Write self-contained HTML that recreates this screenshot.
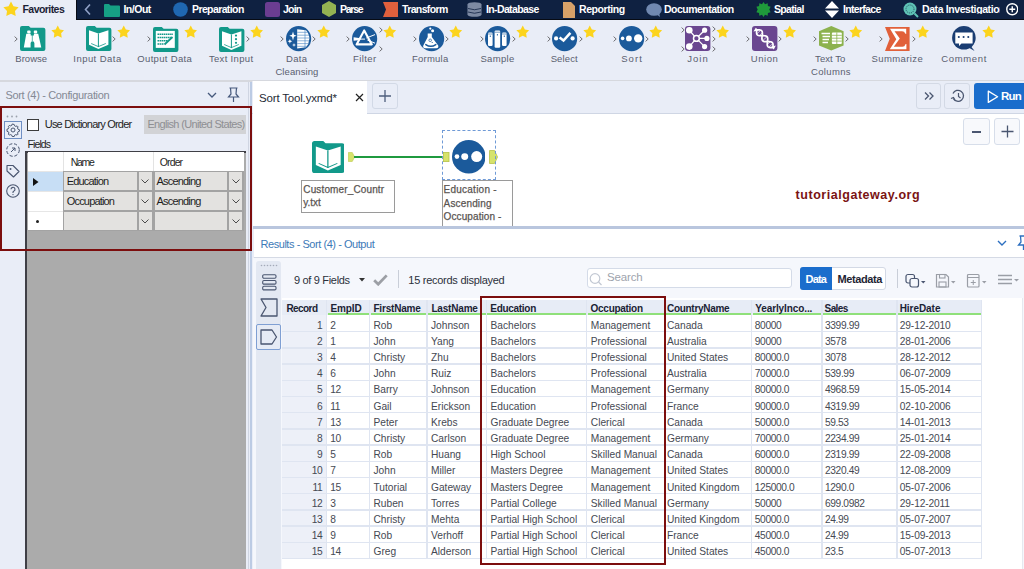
<!DOCTYPE html><html><head><meta charset="utf-8"><style>
*{box-sizing:border-box;margin:0;padding:0}
html,body{width:1024px;height:569px;overflow:hidden;background:#e9edf7;font-family:"Liberation Sans",sans-serif;position:relative}
.a{position:absolute}
.tx{position:absolute;white-space:nowrap}
.navt{position:absolute;color:#fff;font-weight:bold;font-size:11px;top:3px;white-space:nowrap;line-height:13px}
.lbl{position:absolute;font-size:10px;color:#596070;white-space:nowrap;text-align:center;line-height:13px;width:90px}
.c{position:absolute;top:0;height:100%;font-size:10.5px;color:#3b404b;white-space:nowrap;overflow:hidden;padding-left:4px;border-right:1px solid #dfe5f1;line-height:16px}
.h{font-weight:bold;color:#1c2438;background:#e7ecf6}
.rh{background:#edf0f8;text-align:right;padding-right:5px;padding-left:0}
</style></head><body>
<div class="a" style="left:75.5px;top:0;width:949px;height:19.5px;background:#0f2141;border-left:1px solid #070b14;border-bottom:1.5px solid #070b14"></div>
<svg class="a" style="left:2.5px;top:0.5px" width="16" height="16" viewBox="0 0 24 24"><path d="M12.00 0.90 L15.70 7.80 L23.41 9.19 L17.99 14.85 L19.05 22.61 L12.00 19.20 L4.95 22.61 L6.01 14.85 L0.59 9.19 L8.30 7.80z" fill="#fcd41d"/></svg>
<div class="tx" id="t_1" style="left:22.50px;top:3.81px;font-size:10.5px;line-height:10.5px;color:#1b2236;font-weight:bold;letter-spacing:-0.557px;">Favorites</div>
<svg class="a" style="left:83px;top:3px" width="10" height="13" viewBox="0 0 10 13"><path d="M7 1.5L2.5 6.5 7 11.5" stroke="#8fa0c6" stroke-width="1.6" fill="none"/></svg>
<svg class="a" style="left:104px;top:3px" width="16" height="14" viewBox="0 0 16 14"><path d="M0 2a1 1 0 0 1 1-1h4l1.5 1.5H15a1 1 0 0 1 1 1V13a1 1 0 0 1-1 1H1a1 1 0 0 1-1-1z" fill="#16a085"/></svg>
<div class="tx" id="t_2" style="left:123.40px;top:3.81px;font-size:10.5px;line-height:10.5px;color:#fff;font-weight:bold;letter-spacing:-0.475px;">In/Out</div>
<svg class="a" style="left:173px;top:2px" width="15" height="15" viewBox="0 0 15 15"><circle cx="7.5" cy="7.5" r="7.3" fill="#1f67b1"/></svg>
<div class="tx" id="t_3" style="left:192.00px;top:3.81px;font-size:10.5px;line-height:10.5px;color:#fff;font-weight:bold;letter-spacing:-0.605px;">Preparation</div>
<svg class="a" style="left:265px;top:2px" width="15" height="15" viewBox="0 0 15 15"><rect x="0" y="0" width="15" height="15" rx="2.5" fill="#6b3d91"/></svg>
<div class="tx" id="t_4" style="left:283.00px;top:3.81px;font-size:10.5px;line-height:10.5px;color:#fff;font-weight:bold;letter-spacing:-0.782px;">Join</div>
<svg class="a" style="left:322px;top:1px" width="14" height="16" viewBox="0 0 14 16"><path d="M7 0L14 4V12L7 16L0 12V4z" fill="#94b352"/></svg>
<div class="tx" id="t_5" style="left:340.00px;top:3.81px;font-size:10.5px;line-height:10.5px;color:#fff;font-weight:bold;letter-spacing:-1.262px;">Parse</div>
<svg class="a" style="left:383px;top:2px" width="15" height="15" viewBox="0 0 15 15"><path d="M0 0H15V15H0L3 7.5z" fill="#e0603d"/></svg>
<div class="tx" id="t_6" style="left:402.00px;top:3.81px;font-size:10.5px;line-height:10.5px;color:#fff;font-weight:bold;letter-spacing:-0.632px;">Transform</div>
<svg class="a" style="left:467px;top:2px" width="15" height="15" viewBox="0 0 15 15"><ellipse cx="7.5" cy="2.5" rx="7" ry="2.3" fill="#7d8aa3"/><rect x="0.5" y="2.5" width="14" height="10" fill="#7d8aa3"/><ellipse cx="7.5" cy="12.5" rx="7" ry="2.3" fill="#7d8aa3"/><path d="M1 6.5Q7.5 9 14 6.5M1 10Q7.5 12.5 14 10" stroke="#0f2141" stroke-width="0.8" fill="none"/></svg>
<div class="tx" id="t_7" style="left:486.00px;top:3.81px;font-size:10.5px;line-height:10.5px;color:#fff;font-weight:bold;letter-spacing:-0.630px;">In-Database</div>
<svg class="a" style="left:563px;top:2px" width="12" height="16" viewBox="0 0 12 16"><path d="M0 0H8L12 4V16H0z" fill="#d7a168"/></svg>
<div class="tx" id="t_8" style="left:579.00px;top:3.81px;font-size:10.5px;line-height:10.5px;color:#fff;font-weight:bold;letter-spacing:-0.434px;">Reporting</div>
<svg class="a" style="left:646px;top:3px" width="16" height="14" viewBox="0 0 16 14"><ellipse cx="8" cy="6.5" rx="7.8" ry="6.3" fill="#7088b0"/><path d="M10 11L14 14 13 9z" fill="#7088b0"/></svg>
<div class="tx" id="t_9" style="left:664.00px;top:3.81px;font-size:10.5px;line-height:10.5px;color:#fff;font-weight:bold;letter-spacing:-0.516px;">Documentation</div>
<svg class="a" style="left:756px;top:2px" width="15" height="15" viewBox="0 0 15 15"><path d="M7.5 0L9 2.2 11.7 1.3 11.9 4 14.6 4.8 13.3 7.5 14.6 10.2 11.9 11 11.7 13.7 9 12.8 7.5 15 6 12.8 3.3 13.7 3.1 11 .4 10.2 1.7 7.5 .4 4.8 3.1 4 3.3 1.3 6 2.2z" fill="#1f9a3b"/></svg>
<div class="tx" id="t_10" style="left:774.00px;top:3.81px;font-size:10.5px;line-height:10.5px;color:#fff;font-weight:bold;letter-spacing:-0.686px;">Spatial</div>
<svg class="a" style="left:825px;top:1px" width="14" height="17" viewBox="0 0 14 17"><path d="M7 0L14 7.5H0z M0 9.5H14L7 17z" fill="#fff"/></svg>
<div class="tx" id="t_11" style="left:843.00px;top:3.81px;font-size:10.5px;line-height:10.5px;color:#fff;font-weight:bold;letter-spacing:-0.692px;">Interface</div>
<svg class="a" style="left:903px;top:2px" width="16" height="16" viewBox="0 0 16 16"><circle cx="7" cy="7" r="6.5" fill="#5fc3b6"/><circle cx="7" cy="7" r="4" fill="none" stroke="#0f2141" stroke-width="0.7" stroke-dasharray="1 1"/><path d="M11.5 11.5L15 15" stroke="#5fc3b6" stroke-width="2"/></svg>
<div class="tx" id="t_12" style="left:922.00px;top:3.81px;font-size:10.5px;line-height:10.5px;color:#fff;font-weight:bold;letter-spacing:-0.400px;width:78px;overflow:hidden;">Data Investigation</div>
<svg class="a" style="left:1005.8px;top:3.4px" width="12.5" height="12.5" viewBox="0 0 12.5 12.5"><circle cx="6.25" cy="6.25" r="5.5" stroke="#fff" stroke-width="1.4" fill="none"/><path d="M6.25 3.3V9.2M3.3 6.25H9.2" stroke="#fff" stroke-width="1.4"/></svg>
<div class="a" style="left:0;top:80px;width:1024px;height:2px;background:#d6d8de"></div>
<svg class="a" style="left:19.7px;top:26.2px;overflow:visible" width="26" height="26" viewBox="0 0 26 26"><path d="M0 2a2 2 0 0 1 2-2H8.8l1.8 1.8H23.4a2 2 0 0 1 2 2V23a2 2 0 0 1-2 2H2a2 2 0 0 1-2-2z" fill="#12998a"/><rect x="7.2" y="4.6" width="3.4" height="2.8" rx=".8" fill="#fff"/><rect x="13.8" y="4.6" width="3.4" height="2.8" rx=".8" fill="#fff"/><path d="M3.8 21.6L6.3 7.8H10.7V9.6H13.9V7.8H18.2L21.3 21.6H14.4V17.2a1.9 1.9 0 0 0-3.8 0V21.6z" fill="#fff"/><path d="M12.3 8.8V15" stroke="#12998a" stroke-width=".7"/></svg>
<svg class="a" style="left:50.599999999999994px;top:25.2px" width="13.5" height="13.5" viewBox="0 0 24 24"><path d="M12.00 0.90 L15.70 7.80 L23.41 9.19 L17.99 14.85 L19.05 22.61 L12.00 19.20 L4.95 22.61 L6.01 14.85 L0.59 9.19 L8.30 7.80z" fill="#fcd41d"/></svg>
<svg class="a" style="left:13.899999999999999px;top:36px" width="4" height="6" viewBox="0 0 4 6"><path d="M.6 .6L3.2 3 .6 5.4" stroke="#6e6e72" stroke-width="1" fill="none"/></svg>
<div class="tx" id="t_13" style="left:-118.78px;width:300px;text-align:center;top:53.66px;font-size:9.5px;line-height:9.5px;color:#5a6070;letter-spacing:0.039px;">Browse</div>
<svg class="a" style="left:85.9px;top:26.2px;overflow:visible" width="26" height="26" viewBox="0 0 26 26"><path d="M0 2a2 2 0 0 1 2-2H8.8l1.8 1.8H23.4a2 2 0 0 1 2 2V23a2 2 0 0 1-2 2H2a2 2 0 0 1-2-2z" fill="#12998a"/><path d="M3 4.2L12.4 7.5 22.4 4.2V18.8L12.4 23 3 18.8z" fill="#fff"/><path d="M12.4 7.5V21" stroke="#12998a" stroke-width="1"/><path d="M5.2 17.5L12.4 20.6 19.8 17.5" stroke="#12998a" stroke-width=".8" fill="none"/></svg>
<svg class="a" style="left:116.80000000000001px;top:25.2px" width="13.5" height="13.5" viewBox="0 0 24 24"><path d="M12.00 0.90 L15.70 7.80 L23.41 9.19 L17.99 14.85 L19.05 22.61 L12.00 19.20 L4.95 22.61 L6.01 14.85 L0.59 9.19 L8.30 7.80z" fill="#fcd41d"/></svg>
<svg class="a" style="left:112.4px;top:36px" width="4" height="6" viewBox="0 0 4 6"><path d="M.6 .6L3.2 3 .6 5.4" stroke="#6e6e72" stroke-width="1" fill="none"/></svg>
<div class="tx" id="t_14" style="left:-52.53px;width:300px;text-align:center;top:53.66px;font-size:9.5px;line-height:9.5px;color:#5a6070;letter-spacing:0.443px;">Input Data</div>
<svg class="a" style="left:152.6px;top:26.6px;overflow:visible" width="26" height="26" viewBox="0 0 26 26"><path d="M0 2a2 2 0 0 1 2-2H8.8l1.8 1.8H23.4a2 2 0 0 1 2 2V23a2 2 0 0 1-2 2H2a2 2 0 0 1-2-2z" fill="#12998a"/><rect x="2.8" y="3.9" width="19" height="17" fill="#fff"/><path d="M4.5 7.2H20M4.5 10.6H18M4.5 13.8H14.5M4.5 17H11" stroke="#12998a" stroke-width="1.5" stroke-dasharray="1.6 .5"/><path d="M11.5 17.5L19.5 10" stroke="#12998a" stroke-width="1.8"/></svg>
<svg class="a" style="left:183.5px;top:25.2px" width="13.5" height="13.5" viewBox="0 0 24 24"><path d="M12.00 0.90 L15.70 7.80 L23.41 9.19 L17.99 14.85 L19.05 22.61 L12.00 19.20 L4.95 22.61 L6.01 14.85 L0.59 9.19 L8.30 7.80z" fill="#fcd41d"/></svg>
<svg class="a" style="left:146.79999999999998px;top:36px" width="4" height="6" viewBox="0 0 4 6"><path d="M.6 .6L3.2 3 .6 5.4" stroke="#6e6e72" stroke-width="1" fill="none"/></svg>
<div class="tx" id="t_15" style="left:14.71px;width:300px;text-align:center;top:53.66px;font-size:9.5px;line-height:9.5px;color:#5a6070;letter-spacing:0.320px;">Output Data</div>
<svg class="a" style="left:219px;top:26.6px;overflow:visible" width="26" height="26" viewBox="0 0 26 26"><path d="M0 2a2 2 0 0 1 2-2H8.8l1.8 1.8H23.4a2 2 0 0 1 2 2V23a2 2 0 0 1-2 2H2a2 2 0 0 1-2-2z" fill="#12998a"/><path d="M3 4.2L12.4 7.5 22.4 4.2V18.8L12.4 23 3 18.8z" fill="#fff"/><path d="M12.4 7.5V21" stroke="#12998a" stroke-width="1"/><path d="M5.2 17.5L12.4 20.6 19.8 17.5" stroke="#12998a" stroke-width=".8" fill="none"/><circle cx="17" cy="8.6" r="1.1" fill="#12998a"/><circle cx="17" cy="12.2" r="1.1" fill="#12998a"/><circle cx="17" cy="15.8" r="1.1" fill="#12998a"/></svg>
<svg class="a" style="left:249.9px;top:25.2px" width="13.5" height="13.5" viewBox="0 0 24 24"><path d="M12.00 0.90 L15.70 7.80 L23.41 9.19 L17.99 14.85 L19.05 22.61 L12.00 19.20 L4.95 22.61 L6.01 14.85 L0.59 9.19 L8.30 7.80z" fill="#fcd41d"/></svg>
<svg class="a" style="left:245.5px;top:36px" width="4" height="6" viewBox="0 0 4 6"><path d="M.6 .6L3.2 3 .6 5.4" stroke="#6e6e72" stroke-width="1" fill="none"/></svg>
<div class="tx" id="t_16" style="left:81.17px;width:300px;text-align:center;top:53.66px;font-size:9.5px;line-height:9.5px;color:#5a6070;letter-spacing:0.333px;">Text Input</div>
<svg class="a" style="left:285.6px;top:26.1px;overflow:visible" width="26" height="26" viewBox="0 0 26 26"><circle cx="12.6" cy="12.7" r="12.6" fill="#1b5a9b"/><path d="M11.2 3.3L20 4.2Q23.5 8 23.3 13Q23 18 20 21.3L11.2 22.6z" fill="#fff"/><path d="M11.2 6.3H22M11.2 9.2H23M11.2 12H23.3M11.2 14.8H23.2M11.2 17.6H22.5M11.2 20.3H21M19 4V22" stroke="#3f7fc0" stroke-width=".6"/><path d="M7 5.6L8 8.8 10.6 9.8 8 10.8 7 14.5 6 10.8 3.3 9.8 6 8.8z M3.9 13L4.5 14.6 6.3 15.3 4.5 16 3.9 17.7 3.3 16 1.6 15.3 3.3 14.6z M8 17L8.5 18.4 10 19 8.5 19.6 8 21 7.5 19.6 6 19 7.5 18.4z" fill="#fff"/></svg>
<svg class="a" style="left:316.5px;top:25.2px" width="13.5" height="13.5" viewBox="0 0 24 24"><path d="M12.00 0.90 L15.70 7.80 L23.41 9.19 L17.99 14.85 L19.05 22.61 L12.00 19.20 L4.95 22.61 L6.01 14.85 L0.59 9.19 L8.30 7.80z" fill="#fcd41d"/></svg>
<svg class="a" style="left:279.8px;top:36px" width="4" height="6" viewBox="0 0 4 6"><path d="M.6 .6L3.2 3 .6 5.4" stroke="#6e6e72" stroke-width="1" fill="none"/></svg>
<svg class="a" style="left:312.1px;top:36px" width="4" height="6" viewBox="0 0 4 6"><path d="M.6 .6L3.2 3 .6 5.4" stroke="#6e6e72" stroke-width="1" fill="none"/></svg>
<div class="tx" id="t_17" style="left:146.76px;width:300px;text-align:center;top:53.66px;font-size:9.5px;line-height:9.5px;color:#5a6070;letter-spacing:0.314px;">Data</div>
<div class="tx" id="t_18" style="left:146.95px;width:300px;text-align:center;top:66.66px;font-size:9.5px;line-height:9.5px;color:#5a6070;letter-spacing:0.094px;">Cleansing</div>
<svg class="a" style="left:352.2px;top:25.9px;overflow:visible" width="26" height="26" viewBox="0 0 26 26"><circle cx="12.6" cy="12.7" r="12.6" fill="#1b5a9b"/><path d="M12.2 4.4L19.8 18.4H4.6z" fill="none" stroke="#fff" stroke-width="2.1" stroke-linejoin="round"/><path d="M1.6 11.2L8.6 12.2V14L1.6 14.8z" fill="#fff"/><path d="M8.5 13.1H13M14.3 12L23 8.6M15.3 14L23 17.2" stroke="#fff" stroke-width="1"/></svg>
<svg class="a" style="left:383.09999999999997px;top:25.2px" width="13.5" height="13.5" viewBox="0 0 24 24"><path d="M12.00 0.90 L15.70 7.80 L23.41 9.19 L17.99 14.85 L19.05 22.61 L12.00 19.20 L4.95 22.61 L6.01 14.85 L0.59 9.19 L8.30 7.80z" fill="#fcd41d"/></svg>
<svg class="a" style="left:346.4px;top:36px" width="4" height="6" viewBox="0 0 4 6"><path d="M.6 .6L3.2 3 .6 5.4" stroke="#6e6e72" stroke-width="1" fill="none"/></svg>
<svg class="a" style="left:378.7px;top:26.5px" width="4" height="6" viewBox="0 0 4 6"><path d="M.6 .6L3.2 3 .6 5.4" stroke="#6e6e72" stroke-width="1" fill="none"/></svg>
<svg class="a" style="left:378.7px;top:45.5px" width="4" height="6" viewBox="0 0 4 6"><path d="M.6 .6L3.2 3 .6 5.4" stroke="#6e6e72" stroke-width="1" fill="none"/></svg>
<div class="tx" id="t_19" style="left:214.84px;width:300px;text-align:center;top:53.66px;font-size:9.5px;line-height:9.5px;color:#5a6070;letter-spacing:0.389px;">Filter</div>
<svg class="a" style="left:418.5px;top:26px;overflow:visible" width="26" height="26" viewBox="0 0 26 26"><circle cx="12.6" cy="12.7" r="12.6" fill="#1b5a9b"/><path d="M8.7 7.5H12.8V11L19.2 19.5A2.2 2.2 0 0 1 17.4 22.3H6.2A2.2 2.2 0 0 1 4.3 19.5L8.7 11z" fill="#fff"/><path d="M6.8 18.6Q11.8 22 16.8 18.6" stroke="#1b5a9b" stroke-width="1.5" fill="none" stroke-linecap="round"/><circle cx="11.2" cy="14.3" r="1.3" fill="none" stroke="#1b5a9b" stroke-width=".7"/><circle cx="13.2" cy="16.5" r=".6" fill="#1b5a9b"/><circle cx="13.6" cy="4.8" r="1.5" fill="#fff"/><circle cx="11.3" cy="2.6" r="1.1" fill="#fff"/></svg>
<svg class="a" style="left:449.4px;top:25.2px" width="13.5" height="13.5" viewBox="0 0 24 24"><path d="M12.00 0.90 L15.70 7.80 L23.41 9.19 L17.99 14.85 L19.05 22.61 L12.00 19.20 L4.95 22.61 L6.01 14.85 L0.59 9.19 L8.30 7.80z" fill="#fcd41d"/></svg>
<svg class="a" style="left:412.7px;top:36px" width="4" height="6" viewBox="0 0 4 6"><path d="M.6 .6L3.2 3 .6 5.4" stroke="#6e6e72" stroke-width="1" fill="none"/></svg>
<svg class="a" style="left:445.0px;top:36px" width="4" height="6" viewBox="0 0 4 6"><path d="M.6 .6L3.2 3 .6 5.4" stroke="#6e6e72" stroke-width="1" fill="none"/></svg>
<div class="tx" id="t_20" style="left:280.21px;width:300px;text-align:center;top:53.66px;font-size:9.5px;line-height:9.5px;color:#5a6070;letter-spacing:0.218px;">Formula</div>
<svg class="a" style="left:485.3px;top:26.2px;overflow:visible" width="26" height="26" viewBox="0 0 26 26"><circle cx="12.6" cy="12.7" r="12.6" fill="#1b5a9b"/><rect x="3" y="6.5" width="4.6" height="13.5" rx="1.2" fill="#fff"/><rect x="9.6" y="4.6" width="5.6" height="17.2" rx="1.2" fill="#fff"/><rect x="17" y="6.5" width="4.6" height="13.5" rx="1.2" fill="#fff"/><path d="M3 8H7.6M9.6 6.2H15.2M17 8H21.6" stroke="#1b5a9b" stroke-width=".6"/><path d="M5.3 9.5V11M12.4 8V9.5M19.3 9.5V11" stroke="#1b5a9b" stroke-width=".9"/></svg>
<svg class="a" style="left:516.2px;top:25.2px" width="13.5" height="13.5" viewBox="0 0 24 24"><path d="M12.00 0.90 L15.70 7.80 L23.41 9.19 L17.99 14.85 L19.05 22.61 L12.00 19.20 L4.95 22.61 L6.01 14.85 L0.59 9.19 L8.30 7.80z" fill="#fcd41d"/></svg>
<svg class="a" style="left:479.5px;top:36px" width="4" height="6" viewBox="0 0 4 6"><path d="M.6 .6L3.2 3 .6 5.4" stroke="#6e6e72" stroke-width="1" fill="none"/></svg>
<svg class="a" style="left:511.8px;top:36px" width="4" height="6" viewBox="0 0 4 6"><path d="M.6 .6L3.2 3 .6 5.4" stroke="#6e6e72" stroke-width="1" fill="none"/></svg>
<div class="tx" id="t_21" style="left:347.57px;width:300px;text-align:center;top:53.66px;font-size:9.5px;line-height:9.5px;color:#5a6070;letter-spacing:0.337px;">Sample</div>
<svg class="a" style="left:552.3px;top:26.2px;overflow:visible" width="26" height="26" viewBox="0 0 26 26"><circle cx="12.6" cy="12.7" r="12.6" fill="#1b5a9b"/><circle cx="4.1" cy="12.4" r="2.1" fill="#fff"/><circle cx="20.6" cy="12.4" r="2.1" fill="#fff"/><path d="M7.6 11.6L11.5 14.6 18.4 6.8" stroke="#fff" stroke-width="2.5" fill="none"/></svg>
<svg class="a" style="left:583.1999999999999px;top:25.2px" width="13.5" height="13.5" viewBox="0 0 24 24"><path d="M12.00 0.90 L15.70 7.80 L23.41 9.19 L17.99 14.85 L19.05 22.61 L12.00 19.20 L4.95 22.61 L6.01 14.85 L0.59 9.19 L8.30 7.80z" fill="#fcd41d"/></svg>
<svg class="a" style="left:546.5px;top:36px" width="4" height="6" viewBox="0 0 4 6"><path d="M.6 .6L3.2 3 .6 5.4" stroke="#6e6e72" stroke-width="1" fill="none"/></svg>
<svg class="a" style="left:578.8px;top:36px" width="4" height="6" viewBox="0 0 4 6"><path d="M.6 .6L3.2 3 .6 5.4" stroke="#6e6e72" stroke-width="1" fill="none"/></svg>
<div class="tx" id="t_22" style="left:414.21px;width:300px;text-align:center;top:53.66px;font-size:9.5px;line-height:9.5px;color:#5a6070;letter-spacing:0.122px;">Select</div>
<svg class="a" style="left:618.5px;top:26.2px;overflow:visible" width="26" height="26" viewBox="0 0 26 26"><circle cx="12.6" cy="12.7" r="12.6" fill="#1b5a9b"/><circle cx="3.6" cy="12.4" r="1.8" fill="#fff"/><circle cx="9.9" cy="12.4" r="2.9" fill="#fff"/><circle cx="19.2" cy="12.4" r="4.2" fill="#fff"/></svg>
<svg class="a" style="left:649.4px;top:25.2px" width="13.5" height="13.5" viewBox="0 0 24 24"><path d="M12.00 0.90 L15.70 7.80 L23.41 9.19 L17.99 14.85 L19.05 22.61 L12.00 19.20 L4.95 22.61 L6.01 14.85 L0.59 9.19 L8.30 7.80z" fill="#fcd41d"/></svg>
<svg class="a" style="left:612.7px;top:36px" width="4" height="6" viewBox="0 0 4 6"><path d="M.6 .6L3.2 3 .6 5.4" stroke="#6e6e72" stroke-width="1" fill="none"/></svg>
<svg class="a" style="left:645.0px;top:36px" width="4" height="6" viewBox="0 0 4 6"><path d="M.6 .6L3.2 3 .6 5.4" stroke="#6e6e72" stroke-width="1" fill="none"/></svg>
<div class="tx" id="t_23" style="left:482.11px;width:300px;text-align:center;top:53.66px;font-size:9.5px;line-height:9.5px;color:#5a6070;letter-spacing:1.116px;">Sort</div>
<svg class="a" style="left:685px;top:26.4px;overflow:visible" width="26" height="26" viewBox="0 0 26 26"><rect x="0" y="0" width="25.4" height="25" rx="3" fill="#6a4690"/><path d="M4.3 4.2L11.4 12.4M4.3 20.6L11.4 12.4M11.4 12.4L19.6 4.2M11.4 12.4H21.9M11.4 12.4L19.6 20.6" stroke="#fff" stroke-width="1.3"/><circle cx="11.4" cy="12.4" r="2.9" fill="#6a4690" stroke="#fff" stroke-width="1.5"/><circle cx="4.3" cy="4.2" r="3.3" fill="#fff"/><circle cx="4.3" cy="20.6" r="3.3" fill="#fff"/><circle cx="19.6" cy="4.2" r="2.6" fill="#fff"/><circle cx="21.9" cy="12.4" r="2.6" fill="#fff"/><circle cx="19.6" cy="20.6" r="2.6" fill="#fff"/></svg>
<svg class="a" style="left:715.9px;top:25.2px" width="13.5" height="13.5" viewBox="0 0 24 24"><path d="M12.00 0.90 L15.70 7.80 L23.41 9.19 L17.99 14.85 L19.05 22.61 L12.00 19.20 L4.95 22.61 L6.01 14.85 L0.59 9.19 L8.30 7.80z" fill="#fcd41d"/></svg>
<svg class="a" style="left:680.5px;top:26.5px" width="4" height="6" viewBox="0 0 4 6"><path d="M.6 .6L3.2 3 .6 5.4" stroke="#6e6e72" stroke-width="1" fill="none"/></svg>
<svg class="a" style="left:680.5px;top:45.5px" width="4" height="6" viewBox="0 0 4 6"><path d="M.6 .6L3.2 3 .6 5.4" stroke="#6e6e72" stroke-width="1" fill="none"/></svg>
<svg class="a" style="left:712px;top:26px" width="4" height="6" viewBox="0 0 4 6"><path d="M.6 .6L3.2 3 .6 5.4" stroke="#6e6e72" stroke-width="1" fill="none"/></svg>
<svg class="a" style="left:712px;top:36px" width="4" height="6" viewBox="0 0 4 6"><path d="M.6 .6L3.2 3 .6 5.4" stroke="#6e6e72" stroke-width="1" fill="none"/></svg>
<svg class="a" style="left:712px;top:45.5px" width="4" height="6" viewBox="0 0 4 6"><path d="M.6 .6L3.2 3 .6 5.4" stroke="#6e6e72" stroke-width="1" fill="none"/></svg>
<div class="tx" id="t_24" style="left:548.01px;width:300px;text-align:center;top:53.66px;font-size:9.5px;line-height:9.5px;color:#5a6070;letter-spacing:1.024px;">Join</div>
<svg class="a" style="left:751.9px;top:26.2px;overflow:visible" width="26" height="26" viewBox="0 0 26 26"><rect x="0" y="0" width="25.4" height="25" rx="3" fill="#6a4690"/><path d="M4.80 3.80 L4.68 4.71 L4.59 5.60 L4.55 6.44 L4.59 7.20 L4.74 7.88 L5.00 8.45 L5.38 8.91 L5.88 9.27 L6.50 9.51 L7.22 9.67 L8.03 9.74 L8.91 9.76 L9.82 9.74 L10.75 9.72 L11.65 9.71 L12.51 9.74 L13.30 9.84 L13.99 10.02 L14.57 10.30 L15.03 10.69 L15.37 11.19 L15.59 11.80 L15.70 12.51 L15.71 13.30 L15.65 14.16 L15.55 15.06 L15.42 15.97 L15.31 16.88 L15.23 17.75 L15.22 18.57 L15.30 19.30 L15.48 19.95 L15.78 20.48 L16.20 20.91 L16.74 21.23 L17.39 21.44 L18.15 21.57 L18.99 21.62 L19.88 21.62 L20.80 21.60" stroke="#fff" stroke-width="1.7" fill="none"/><path d="M4.80 3.80 L5.72 3.78 L6.61 3.78 L7.45 3.83 L8.21 3.96 L8.86 4.17 L9.40 4.49 L9.82 4.92 L10.12 5.45 L10.30 6.10 L10.38 6.83 L10.37 7.65 L10.29 8.52 L10.18 9.43 L10.05 10.34 L9.95 11.24 L9.89 12.10 L9.90 12.89 L10.01 13.60 L10.23 14.21 L10.57 14.71 L11.03 15.10 L11.61 15.38 L12.30 15.56 L13.09 15.66 L13.95 15.69 L14.85 15.68 L15.78 15.66 L16.69 15.64 L17.57 15.66 L18.38 15.73 L19.10 15.89 L19.72 16.13 L20.22 16.49 L20.60 16.95 L20.86 17.52 L21.01 18.20 L21.05 18.96 L21.01 19.80 L20.92 20.69 L20.80 21.60" stroke="#fff" stroke-width="1.7" fill="none"/><path d="M4.74 7.88L8.86 4.17M7.22 9.67L10.38 6.83M11.65 9.71L9.95 11.24M15.03 10.69L10.57 14.71M15.65 14.16L13.95 15.69M15.22 18.57L18.38 15.73M16.74 21.23L20.86 17.52" stroke="#fff" stroke-width="0.8" opacity="0.8"/><path d="M1.5 5.5L3.8 1.8 6.5 4.5z M23.8 19.5L21.8 23.5 19 20.8z" fill="#fff"/></svg>
<svg class="a" style="left:782.8px;top:25.2px" width="13.5" height="13.5" viewBox="0 0 24 24"><path d="M12.00 0.90 L15.70 7.80 L23.41 9.19 L17.99 14.85 L19.05 22.61 L12.00 19.20 L4.95 22.61 L6.01 14.85 L0.59 9.19 L8.30 7.80z" fill="#fcd41d"/></svg>
<svg class="a" style="left:746.1px;top:36px" width="4" height="6" viewBox="0 0 4 6"><path d="M.6 .6L3.2 3 .6 5.4" stroke="#6e6e72" stroke-width="1" fill="none"/></svg>
<svg class="a" style="left:778.4px;top:36px" width="4" height="6" viewBox="0 0 4 6"><path d="M.6 .6L3.2 3 .6 5.4" stroke="#6e6e72" stroke-width="1" fill="none"/></svg>
<div class="tx" id="t_25" style="left:614.60px;width:300px;text-align:center;top:53.66px;font-size:9.5px;line-height:9.5px;color:#5a6070;letter-spacing:0.594px;">Union</div>
<svg class="a" style="left:818.5px;top:26.4px;overflow:visible" width="26" height="26" viewBox="0 0 26 26"><path d="M12.3 0L24.6 5.3V19.4L12.3 24.6 0 19.4V5.3z" fill="#8cb24e"/><path d="M2.5 7.6H11M3.5 10.5H11M3.5 13.5H10M3.5 16.4H9" stroke="#fff" stroke-width="1.5"/><rect x="12.9" y="6.4" width="9.9" height="11.7" rx="1" fill="#fff"/><path d="M12.9 9.3H22.8M12.9 12.2H22.8M12.9 15.1H22.8M17.8 6.4V18.1" stroke="#8cb24e" stroke-width=".8"/></svg>
<svg class="a" style="left:849.4px;top:25.2px" width="13.5" height="13.5" viewBox="0 0 24 24"><path d="M12.00 0.90 L15.70 7.80 L23.41 9.19 L17.99 14.85 L19.05 22.61 L12.00 19.20 L4.95 22.61 L6.01 14.85 L0.59 9.19 L8.30 7.80z" fill="#fcd41d"/></svg>
<svg class="a" style="left:812.7px;top:36px" width="4" height="6" viewBox="0 0 4 6"><path d="M.6 .6L3.2 3 .6 5.4" stroke="#6e6e72" stroke-width="1" fill="none"/></svg>
<svg class="a" style="left:845.0px;top:36px" width="4" height="6" viewBox="0 0 4 6"><path d="M.6 .6L3.2 3 .6 5.4" stroke="#6e6e72" stroke-width="1" fill="none"/></svg>
<div class="tx" id="t_26" style="left:680.28px;width:300px;text-align:center;top:53.66px;font-size:9.5px;line-height:9.5px;color:#5a6070;letter-spacing:0.068px;">Text To</div>
<div class="tx" id="t_27" style="left:680.93px;width:300px;text-align:center;top:66.66px;font-size:9.5px;line-height:9.5px;color:#5a6070;letter-spacing:0.360px;">Columns</div>
<svg class="a" style="left:885px;top:26.6px;overflow:visible" width="26" height="26" viewBox="0 0 26 26"><path d="M0 0H24.6V24H0L4.7 11.8z" fill="#e1603a"/><path d="M5 1.8H21.2V7L20.2 6.6Q19.5 4.2 17 4.2H9.5L14.8 11.5 8.8 19.8H17.5Q19.8 19.8 20.4 17.2L21.4 17V22.3H4.8L11.3 12.3z" fill="#fff"/></svg>
<svg class="a" style="left:915.9px;top:25.2px" width="13.5" height="13.5" viewBox="0 0 24 24"><path d="M12.00 0.90 L15.70 7.80 L23.41 9.19 L17.99 14.85 L19.05 22.61 L12.00 19.20 L4.95 22.61 L6.01 14.85 L0.59 9.19 L8.30 7.80z" fill="#fcd41d"/></svg>
<svg class="a" style="left:879.2px;top:36px" width="4" height="6" viewBox="0 0 4 6"><path d="M.6 .6L3.2 3 .6 5.4" stroke="#6e6e72" stroke-width="1" fill="none"/></svg>
<svg class="a" style="left:911.5px;top:36px" width="4" height="6" viewBox="0 0 4 6"><path d="M.6 .6L3.2 3 .6 5.4" stroke="#6e6e72" stroke-width="1" fill="none"/></svg>
<div class="tx" id="t_28" style="left:747.34px;width:300px;text-align:center;top:53.66px;font-size:9.5px;line-height:9.5px;color:#5a6070;letter-spacing:0.377px;">Summarize</div>
<svg class="a" style="left:951px;top:26px;overflow:visible" width="26" height="26" viewBox="0 0 26 26"><circle cx="12.9" cy="11.8" r="11.8" fill="#1a3d72"/><path d="M19.5 19.8L23.6 25 17.5 21.6z" fill="#1a3d72"/><path d="M4.3 6.5H21.6V17.6H10.5L8 20V17.6H4.3z" fill="#fff"/><circle cx="7.8" cy="11" r="1.05" fill="#1a3d72"/><circle cx="12.6" cy="11" r="1.05" fill="#1a3d72"/><circle cx="17.3" cy="11" r="1.05" fill="#1a3d72"/></svg>
<svg class="a" style="left:981.9px;top:25.2px" width="13.5" height="13.5" viewBox="0 0 24 24"><path d="M12.00 0.90 L15.70 7.80 L23.41 9.19 L17.99 14.85 L19.05 22.61 L12.00 19.20 L4.95 22.61 L6.01 14.85 L0.59 9.19 L8.30 7.80z" fill="#fcd41d"/></svg>
<div class="tx" id="t_29" style="left:814.13px;width:300px;text-align:center;top:53.66px;font-size:9.5px;line-height:9.5px;color:#5a6070;letter-spacing:0.659px;">Comment</div>
<div class="tx" id="t_30" style="left:5.50px;top:89.69px;font-size:11px;line-height:11px;color:#848994;letter-spacing:-0.338px;">Sort (4) - Configuration</div>
<svg class="a" style="left:207px;top:92px" width="10" height="7" viewBox="0 0 10 7"><path d="M1 1l4 4 4-4" stroke="#46597c" stroke-width="1.3" fill="none"/></svg>
<svg class="a" style="left:227px;top:87px" width="13" height="16" viewBox="0 0 13 16"><path d="M2.5 1h8M3.5 1l.5 6-2.5 3h10L9 7l.5-6M6.5 10v5" stroke="#46597c" stroke-width="1.2" fill="none"/></svg>
<div class="a" style="left:248px;top:82px;width:1px;height:487px;background:#cfd5e2"></div>
<div class="a" style="left:250px;top:82px;width:2px;height:487px;background:#bccbe4"></div>
<svg class="a" style="left:6px;top:114.5px" width="12" height="3" viewBox="0 0 12 3"><circle cx="1.5" cy="1.5" r="0.9" fill="#9aa0ab"/><circle cx="6" cy="1.5" r="0.9" fill="#9aa0ab"/><circle cx="10.5" cy="1.5" r="0.9" fill="#9aa0ab"/></svg>
<div class="a" style="left:4px;top:121px;width:18px;height:18px;border:1px solid #6f8fc4;background:#e9eef9"></div>
<svg class="a" style="left:5px;top:122px" width="16" height="16" viewBox="0 0 16 16"><circle cx="8" cy="8" r="2" fill="none" stroke="#4a5670" stroke-width="1"/><path d="M8 2.2l1.2.3.4 1.3 1.2.6 1.3-.5.9.9-.5 1.3.6 1.2 1.3.4v1.6l-1.3.4-.6 1.2.5 1.3-.9.9-1.3-.5-1.2.6-.4 1.3H7.2l-.4-1.3-1.2-.6-1.3.5-.9-.9.5-1.3-.6-1.2-1.3-.4V7.2l1.3-.4.6-1.2-.5-1.3.9-.9 1.3.5 1.2-.6.4-1.3z" fill="none" stroke="#4a5670" stroke-width="1"/></svg>
<svg class="a" style="left:5px;top:142px" width="16" height="16" viewBox="0 0 16 16"><circle cx="8" cy="8" r="6.3" fill="none" stroke="#4a5670" stroke-width="1" stroke-dasharray="3.2 1.8"/><path d="M6 10l4-4M7 6h3v3" stroke="#4a5670" stroke-width="1" fill="none"/></svg>
<svg class="a" style="left:5px;top:163px" width="16" height="16" viewBox="0 0 16 16"><path d="M2 2.5h6l6 6-5.5 5.5-6.5-6z" fill="none" stroke="#4a5670" stroke-width="1.1" stroke-linejoin="round"/><circle cx="5.5" cy="6" r="1" fill="#4a5670"/></svg>
<svg class="a" style="left:5px;top:183px" width="16" height="16" viewBox="0 0 16 16"><circle cx="8" cy="8" r="6.3" fill="none" stroke="#4a5670" stroke-width="1.1"/><path d="M6 6.3a2 2 0 1 1 2.7 1.9c-.5.2-.7.6-.7 1.1v.6" stroke="#4a5670" stroke-width="1.1" fill="none"/><circle cx="8" cy="11.6" r=".7" fill="#4a5670"/></svg>
<div class="a" style="left:27px;top:118.5px;width:12px;height:12px;border:1px solid #3c3c3c;background:#fff"></div>
<div class="tx" id="t_31" style="left:44.80px;top:119.49px;font-size:11px;line-height:11px;color:#1e1e1e;letter-spacing:-0.808px;">Use Dictionary Order</div>
<div class="a" style="left:144px;top:115px;width:102px;height:19px;background:#d2d3d6"></div>
<div class="tx" id="t_32" style="left:147.40px;top:118.69px;font-size:11px;line-height:11px;color:#8e8f93;letter-spacing:-0.665px;">English (United States)</div>
<div class="tx" id="t_33" style="left:27.50px;top:139.11px;font-size:10.5px;line-height:10.5px;color:#1e1e1e;letter-spacing:-0.903px;">Fields</div>
<div class="a" style="left:26px;top:151px;width:220px;height:418px;background:#ababab"></div>
<div class="a" style="left:25.3px;top:151px;width:1.7px;height:418px;background:#3f3f46"></div>
<div class="a" style="left:25.3px;top:151px;width:220.7px;height:1.8px;background:#3f3f46"></div>
<div class="a" style="left:27.5px;top:152px;width:216.5px;height:19px;background:#fff"></div>
<div class="a" style="left:62.7px;top:152px;width:1px;height:19px;background:#e3e3e3"></div>
<div class="a" style="left:153px;top:152px;width:1px;height:19px;background:#e3e3e3"></div>
<div class="tx" id="t_34" style="left:70.70px;top:157.21px;font-size:10.5px;line-height:10.5px;color:#1e1e1e;letter-spacing:-1.312px;">Name</div>
<div class="tx" id="t_35" style="left:159.80px;top:157.21px;font-size:10.5px;line-height:10.5px;color:#1e1e1e;letter-spacing:-0.884px;">Order</div>
<div class="a" style="left:27.5px;top:171px;width:35.2px;height:20px;background:#c7def5;border-top:1px solid #e6e6e6"></div>
<svg class="a" style="left:33px;top:178px" width="6" height="8" viewBox="0 0 6 8"><path d="M0 0L5.5 4 0 8z" fill="#111"/></svg>
<div class="a" style="left:62.7px;top:171px;width:181.3px;height:20px;background:#a3a3a3"></div>
<div class="a" style="left:64px;top:172px;width:73px;height:18px;background:#e3e2e0"></div>
<div class="a" style="left:138.9px;top:172px;width:13.2px;height:18px;background:#e3e2e0"></div>
<div class="a" style="left:154.5px;top:172px;width:72.5px;height:18px;background:#e3e2e0"></div>
<div class="a" style="left:228.7px;top:172px;width:13.6px;height:18px;background:#e3e2e0"></div>
<svg class="a" style="left:141px;top:178.7px" width="8" height="5" viewBox="0 0 8 5"><path d="M.5 .5L4 4 7.5 .5" stroke="#3a3a3a" stroke-width="0.9" fill="none"/></svg>
<svg class="a" style="left:231.5px;top:178.7px" width="8" height="5" viewBox="0 0 8 5"><path d="M.5 .5L4 4 7.5 .5" stroke="#3a3a3a" stroke-width="0.9" fill="none"/></svg>
<div class="tx" id="t_36" style="left:66.80px;top:175.69px;font-size:11px;line-height:11px;color:#1e1e1e;letter-spacing:-0.837px;">Education</div>
<div class="tx" id="t_37" style="left:156.60px;top:175.69px;font-size:11px;line-height:11px;color:#1e1e1e;letter-spacing:-0.825px;">Ascending</div>
<div class="a" style="left:27.5px;top:191px;width:35.2px;height:20px;background:#fff;border-top:1px solid #e6e6e6"></div>
<div class="a" style="left:62.7px;top:191px;width:181.3px;height:20px;background:#a3a3a3"></div>
<div class="a" style="left:64px;top:192px;width:73px;height:18px;background:#e3e2e0"></div>
<div class="a" style="left:138.9px;top:192px;width:13.2px;height:18px;background:#e3e2e0"></div>
<div class="a" style="left:154.5px;top:192px;width:72.5px;height:18px;background:#e3e2e0"></div>
<div class="a" style="left:228.7px;top:192px;width:13.6px;height:18px;background:#e3e2e0"></div>
<svg class="a" style="left:141px;top:198.7px" width="8" height="5" viewBox="0 0 8 5"><path d="M.5 .5L4 4 7.5 .5" stroke="#3a3a3a" stroke-width="0.9" fill="none"/></svg>
<svg class="a" style="left:231.5px;top:198.7px" width="8" height="5" viewBox="0 0 8 5"><path d="M.5 .5L4 4 7.5 .5" stroke="#3a3a3a" stroke-width="0.9" fill="none"/></svg>
<div class="tx" id="t_38" style="left:66.80px;top:195.69px;font-size:11px;line-height:11px;color:#1e1e1e;letter-spacing:-0.828px;">Occupation</div>
<div class="tx" id="t_39" style="left:156.60px;top:195.69px;font-size:11px;line-height:11px;color:#1e1e1e;letter-spacing:-0.825px;">Ascending</div>
<div class="a" style="left:27.5px;top:211px;width:35.2px;height:20px;background:#fff;border-top:1px solid #e6e6e6"></div>
<div class="a" style="left:36px;top:220px;width:3px;height:3px;background:#222;border-radius:1.5px"></div>
<div class="a" style="left:62.7px;top:211px;width:181.3px;height:20px;background:#a3a3a3"></div>
<div class="a" style="left:64px;top:212px;width:73px;height:18px;background:#e3e2e0"></div>
<div class="a" style="left:138.9px;top:212px;width:13.2px;height:18px;background:#e3e2e0"></div>
<div class="a" style="left:154.5px;top:212px;width:72.5px;height:18px;background:#e3e2e0"></div>
<div class="a" style="left:228.7px;top:212px;width:13.6px;height:18px;background:#e3e2e0"></div>
<svg class="a" style="left:141px;top:218.7px" width="8" height="5" viewBox="0 0 8 5"><path d="M.5 .5L4 4 7.5 .5" stroke="#3a3a3a" stroke-width="0.9" fill="none"/></svg>
<svg class="a" style="left:231.5px;top:218.7px" width="8" height="5" viewBox="0 0 8 5"><path d="M.5 .5L4 4 7.5 .5" stroke="#3a3a3a" stroke-width="0.9" fill="none"/></svg>
<div class="a" style="left:27.5px;top:230px;width:216.5px;height:1px;background:#a3a3a3"></div>
<div class="a" style="left:0;top:106px;width:252px;height:145px;border:2px solid #7c0e0e"></div>
<div class="a" style="left:252px;top:81px;width:772px;height:33px;background:#e9edf7;border-bottom:1px solid #cfd6e4"></div>
<div class="a" style="left:253px;top:81px;width:114px;height:33px;background:#fff"></div>
<div class="tx" id="t_40" style="left:259.00px;top:92.77px;font-size:11.5px;line-height:11.5px;color:#262b36;letter-spacing:-0.173px;">Sort Tool.yxmd*</div>
<svg class="a" style="left:355px;top:93px" width="9" height="9" viewBox="0 0 9 9"><path d="M1 1l7 7M8 1L1 8" stroke="#222" stroke-width="1.2"/></svg>
<div class="a" style="left:371.5px;top:82.7px;width:26.5px;height:26.3px;border:1px solid #d2d9e6;border-radius:3px;background:#e9edf7"></div>
<svg class="a" style="left:378px;top:89px" width="14" height="14" viewBox="0 0 14 14"><path d="M7 1v12M1 7h12" stroke="#4e5d7c" stroke-width="1.3"/></svg>
<div class="a" style="left:915.7px;top:83px;width:25.8px;height:26.4px;border:1px solid #d3d9e5;border-radius:3px;background:#e9edf7"></div>
<svg class="a" style="left:923px;top:90px" width="12" height="12" viewBox="0 0 12 12"><path d="M2 2.5l3.5 3.5L2 9.5M6.5 2.5L10 6l-3.5 3.5" stroke="#4a5670" stroke-width="1.3" fill="none"/></svg>
<div class="a" style="left:944.4px;top:83px;width:26.1px;height:26.4px;border:1px solid #d3d9e5;border-radius:3px;background:#e9edf7"></div>
<svg class="a" style="left:950px;top:89px" width="15" height="14" viewBox="0 0 15 14"><path d="M3.2 9.5A5.5 5.5 0 1 0 3 4.5" stroke="#4a5670" stroke-width="1.3" fill="none"/><path d="M8.5 4v3.5l2 1.5" stroke="#4a5670" stroke-width="1.2" fill="none"/><path d="M1 9.5l2.5-1 1.5 2.5" stroke="#4a5670" stroke-width="1.2" fill="none"/></svg>
<div class="a" style="left:973.5px;top:83px;width:60px;height:26.4px;border-radius:3px;background:#1a6dcc"></div>
<svg class="a" style="left:986.5px;top:89.5px" width="12" height="13.5" viewBox="0 0 12 13.5"><path d="M1.3 1.1L10.6 6.75 1.3 12.4z" stroke="#fff" stroke-width="1.3" fill="none" stroke-linejoin="round"/></svg>
<div class="tx" id="t_41" style="left:1000.90px;top:91.07px;font-size:11.5px;line-height:11.5px;color:#fff;font-weight:bold;letter-spacing:-0.750px;">Run</div>
<div class="a" style="left:253px;top:114px;width:771px;height:112px;background:#fff"></div>
<div class="a" style="left:963px;top:118px;width:26.5px;height:26.5px;border:1px solid #d7deea;border-radius:3px;background:#f8f9fc"></div>
<div class="a" style="left:972px;top:131px;width:9px;height:1.6px;background:#4a5670"></div>
<div class="a" style="left:993.6px;top:118px;width:26.7px;height:26.5px;border:1px solid #d7deea;border-radius:3px;background:#f8f9fc"></div>
<svg class="a" style="left:1000.5px;top:125px" width="13" height="13" viewBox="0 0 13 13"><path d="M6.5 .5v12M.5 6.5h12" stroke="#4a5670" stroke-width="1.3"/></svg>
<div class="tx" id="t_42" style="left:795.60px;top:188.62px;font-size:12.5px;line-height:12.5px;color:#7a1313;font-weight:bold;letter-spacing:0.536px;">tutorialgateway.org</div>
<svg class="a" style="left:312px;top:141px" width="32" height="32" viewBox="0 0 25 25"><path d="M0 2a2 2 0 0 1 2-2H8.8l1.8 1.8H23.4a2 2 0 0 1 2 2V23a2 2 0 0 1-2 2H2a2 2 0 0 1-2-2z" fill="#12998a"/><path d="M3 4.2L12.4 7.5 22.4 4.2V18.8L12.4 23 3 18.8z" fill="#fff"/><path d="M12.4 7.5V21" stroke="#12998a" stroke-width="1"/><path d="M5.2 17.5L12.4 20.6 19.8 17.5" stroke="#12998a" stroke-width=".8" fill="none"/></svg>
<svg class="a" style="left:347.6px;top:151.8px" width="7" height="10" viewBox="0 0 7 10"><path d="M.4 .4H4.2L6.6 5 4.2 9.6H.4z" fill="#d6e36b" stroke="#c2cc55" stroke-width="0.7"/></svg>
<div class="a" style="left:354px;top:156.2px;width:89px;height:1.7px;background:#1f9a3f"></div>
<svg class="a" style="left:442.5px;top:152px" width="7" height="10" viewBox="0 0 7 10"><rect x=".4" y=".4" width="5.6" height="9.2" fill="#d6e36b" stroke="#b7c24a" stroke-width="0.8"/></svg>
<svg class="a" style="left:451.5px;top:140.2px" width="33.5" height="33.5" viewBox="0 0 25 25"><circle cx="12.5" cy="12.5" r="12.5" fill="#1b5a9b"/><circle cx="3.7" cy="12.4" r="1.75" fill="#fff"/><circle cx="9.5" cy="12.4" r="2.6" fill="#fff"/><circle cx="18.4" cy="12.4" r="4.1" fill="#fff"/></svg>
<svg class="a" style="left:489px;top:150px" width="9" height="14" viewBox="0 0 9 14"><path d="M.5 .5H5.5L8.5 7 5.5 13.5H.5z" fill="#d6e36b" stroke="#b7c24a" stroke-width="0.8"/></svg>
<div class="a" style="left:441.5px;top:130px;width:54.3px;height:50.3px;border:1px dashed #6f9ad6"></div>
<div class="a" style="left:301.4px;top:180.1px;width:93.4px;height:32.5px;border:1px solid #9a9a9a;background:#fff"></div>
<div class="tx" id="t_43" style="left:303.30px;top:185.23px;font-size:10px;line-height:10px;color:#5a5552;letter-spacing:0.132px;-webkit-text-stroke:0.25px #5a5552;">Customer_Countr</div>
<div class="tx" id="t_44" style="left:303.30px;top:198.23px;font-size:10px;line-height:10px;color:#5a5552;-webkit-text-stroke:0.25px #5a5552;">y.txt</div>
<div class="a" style="left:442.4px;top:180px;width:70.4px;height:50px;border:1px solid #9a9a9a;background:#fff"></div>
<div class="tx" id="t_45" style="left:443.60px;top:185.13px;font-size:10px;line-height:10px;color:#5a5552;letter-spacing:0.234px;-webkit-text-stroke:0.25px #5a5552;">Education -</div>
<div class="tx" id="t_46" style="left:443.60px;top:198.63px;font-size:10px;line-height:10px;color:#5a5552;-webkit-text-stroke:0.25px #5a5552;letter-spacing:0.15px;">Ascending</div>
<div class="tx" id="t_47" style="left:443.60px;top:211.94px;font-size:10px;line-height:10px;color:#5a5552;-webkit-text-stroke:0.25px #5a5552;letter-spacing:0.1px;">Occupation -</div>
<div class="a" style="left:253px;top:225.8px;width:771px;height:3px;background:#b9c6de"></div>
<div class="a" style="left:254px;top:228.8px;width:770px;height:29px;background:#fff;border-bottom:1px solid #d5dae5"></div>
<div class="tx" id="t_48" style="left:260.50px;top:238.59px;font-size:11px;line-height:11px;color:#3d7ab8;letter-spacing:-0.450px;">Results - Sort (4) - Output</div>
<svg class="a" style="left:997px;top:240px" width="10" height="7" viewBox="0 0 10 7"><path d="M1 1l4 4 4-4" stroke="#2c6fc0" stroke-width="1.4" fill="none"/></svg>
<svg class="a" style="left:1017px;top:235px" width="13" height="16" viewBox="0 0 13 16"><path d="M2.5 1h8M3.5 1l.5 6-2.5 3h10L9 7l.5-6M6.5 10v5" stroke="#2c6fc0" stroke-width="1.3" fill="none"/></svg>
<div class="a" style="left:253px;top:258px;width:771px;height:311px;background:#f5f7fc"></div>
<div class="a" style="left:256px;top:261px;width:25px;height:308px;background:#e3e8f2;border-radius:3px 3px 0 0"></div>
<svg class="a" style="left:259.5px;top:263.5px" width="18" height="3" viewBox="0 0 18 3"><circle cx="1.5" cy="1.5" r="0.8" fill="#a3aab8"/><circle cx="4.5" cy="1.5" r="0.8" fill="#a3aab8"/><circle cx="7.5" cy="1.5" r="0.8" fill="#a3aab8"/><circle cx="10.5" cy="1.5" r="0.8" fill="#a3aab8"/><circle cx="13.5" cy="1.5" r="0.8" fill="#a3aab8"/><circle cx="16.5" cy="1.5" r="0.8" fill="#a3aab8"/></svg>
<svg class="a" style="left:261.5px;top:273.8px" width="15" height="17" viewBox="0 0 15 17"><rect x=".7" y=".7" width="13.3" height="3.6" rx="1.2" fill="none" stroke="#4a5670" stroke-width="1.1"/><rect x=".7" y="6.5" width="13.3" height="3.6" rx="1.2" fill="none" stroke="#4a5670" stroke-width="1.1"/><rect x=".7" y="12.3" width="13.3" height="3.6" rx="1.2" fill="none" stroke="#4a5670" stroke-width="1.1"/></svg>
<svg class="a" style="left:260px;top:298px" width="18" height="19" viewBox="0 0 18 19"><path d="M1 1h16v17H1l5-8.5z" fill="none" stroke="#4a5670" stroke-width="1.3" stroke-linejoin="round"/></svg>
<div class="a" style="left:256px;top:324.4px;width:25px;height:25.6px;border:1px solid #7f9fd3;border-radius:2px;background:#e6ebf5"></div>
<svg class="a" style="left:259px;top:329px" width="19" height="16" viewBox="0 0 19 16"><path d="M2 1h11l4.5 7L13 15H2z" fill="none" stroke="#4a5670" stroke-width="1.3" stroke-linejoin="round"/></svg>
<div class="tx" id="t_49" style="left:294.00px;top:274.69px;font-size:11px;line-height:11px;color:#2b303b;letter-spacing:-0.323px;">9 of 9 Fields</div>
<svg class="a" style="left:359px;top:278px" width="6" height="4" viewBox="0 0 6 4"><path d="M0 0h6L3 3.5z" fill="#333"/></svg>
<svg class="a" style="left:373px;top:274px" width="15" height="12" viewBox="0 0 15 12"><path d="M1.2 6.2l4 4 8.5-8.8" stroke="#9c9fa5" stroke-width="2.8" fill="none"/></svg>
<div class="a" style="left:398px;top:270px;width:1px;height:18px;background:#c9ced8"></div>
<div class="tx" id="t_50" style="left:408.30px;top:274.69px;font-size:11px;line-height:11px;color:#2b303b;letter-spacing:-0.267px;">15 records displayed</div>
<div class="a" style="left:586.5px;top:268.3px;width:205.3px;height:19.7px;border:1px solid #d4dbe8;border-radius:3px;background:#fff"></div>
<svg class="a" style="left:589px;top:272px" width="14" height="14" viewBox="0 0 14 14"><circle cx="6" cy="6.5" r="4.8" fill="none" stroke="#c2c8d3" stroke-width="1.2"/><path d="M9.5 10l3 3" stroke="#c2c8d3" stroke-width="1.2"/></svg>
<div class="tx" id="t_51" style="left:606.90px;top:272.27px;font-size:11.5px;line-height:11.5px;color:#9ea3ad;letter-spacing:-0.126px;">Search</div>
<div class="a" style="left:800.3px;top:266.5px;width:85.7px;height:23.5px;border:1px solid #d3d9e5;border-radius:3px;background:#fff"></div>
<div class="a" style="left:800.3px;top:266.5px;width:32px;height:23.5px;border-radius:3px 0 0 3px;background:#1a6dcc"></div>
<div class="tx" id="t_52" style="left:805.50px;top:273.79px;font-size:11px;line-height:11px;color:#fff;font-weight:bold;letter-spacing:-0.786px;">Data</div>
<div class="tx" id="t_53" style="left:837.50px;top:273.79px;font-size:11px;line-height:11px;color:#1e2433;font-weight:bold;letter-spacing:-0.388px;">Metadata</div>
<div class="a" style="left:896.5px;top:269px;width:1px;height:19px;background:#c9ced8"></div>
<svg class="a" style="left:905px;top:273px" width="22" height="16" viewBox="0 0 22 16"><rect x="1" y="1.5" width="8.5" height="8.5" rx="2" fill="none" stroke="#4a5670" stroke-width="1.2"/><rect x="5" y="5.5" width="8.5" height="8.5" rx="2" fill="#f5f7fc" stroke="#4a5670" stroke-width="1.2"/><path d="M16 8h4.5l-2.25 2.5z" fill="#4a5670"/></svg>
<svg class="a" style="left:935px;top:272.5px" width="22" height="16" viewBox="0 0 22 16"><path d="M1.5 1.5h9.5l2.5 2.5v10h-12z" fill="none" stroke="#9a9ea6" stroke-width="1.2"/><rect x="4" y="9" width="7" height="5" fill="none" stroke="#9a9ea6" stroke-width="1.1"/><rect x="4.5" y="1.5" width="5.5" height="3.5" fill="none" stroke="#9a9ea6" stroke-width="1.1"/><path d="M16 8h4.5l-2.25 2.5z" fill="#9a9ea6"/></svg>
<svg class="a" style="left:966px;top:273px" width="22" height="16" viewBox="0 0 22 16"><rect x="1.5" y="1.5" width="11.5" height="12.5" rx="1" fill="none" stroke="#9a9ea6" stroke-width="1.2"/><path d="M1.5 4.5h11.5M7.25 7v5M4.75 9.5h5" stroke="#9a9ea6" stroke-width="1"/><path d="M16 8h4.5l-2.25 2.5z" fill="#9a9ea6"/></svg>
<svg class="a" style="left:996.5px;top:272px" width="24" height="16" viewBox="0 0 24 16"><path d="M1 3.5h14M1 7.5h14M1 11.5h14" stroke="#9a9ea6" stroke-width="1.4"/><path d="M17 7h5l-2.5 2.5z" fill="#9a9ea6"/></svg>
<div class="a" style="left:282px;top:298px;width:740px;height:271px;background:#fff"></div>
<div class="a" style="left:1021.5px;top:298px;width:1px;height:271px;background:#e6e9ef"></div>
<div class="a" style="left:282px;top:300.2px;width:700px;height:14.8px;background:#e7ecf6"></div>
<div class="a" style="left:282px;top:315.0px;width:44.5px;height:243.0px;background:#edf0f8"></div>
<div class="a" style="left:326.5px;top:315.0px;width:655.3px;height:243.0px;background:#fff"></div>
<div class="a" style="left:327.5px;top:313.2px;width:41.5px;height:1.8px;background:#8fe07a"></div>
<div class="a" style="left:370.5px;top:313.2px;width:56.0px;height:1.8px;background:#8fe07a"></div>
<div class="a" style="left:428px;top:313.2px;width:57.9px;height:1.8px;background:#8fe07a"></div>
<div class="a" style="left:487.4px;top:313.2px;width:98.9px;height:1.8px;background:#8fe07a"></div>
<div class="a" style="left:587.8px;top:313.2px;width:76.2px;height:1.8px;background:#8fe07a"></div>
<div class="a" style="left:665.5px;top:313.2px;width:85.5px;height:1.8px;background:#8fe07a"></div>
<div class="a" style="left:752.5px;top:313.2px;width:69.0px;height:1.8px;background:#8fe07a"></div>
<div class="a" style="left:823px;top:313.2px;width:73.5px;height:1.8px;background:#8fe07a"></div>
<div class="a" style="left:898px;top:313.2px;width:83.3px;height:1.8px;background:#8fe07a"></div>
<div class="a" style="left:325.8px;top:300.2px;width:1.4px;height:257.8px;background:#dfe5f1"></div>
<div class="a" style="left:368.8px;top:300.2px;width:1.4px;height:257.8px;background:#dfe5f1"></div>
<div class="a" style="left:426.3px;top:300.2px;width:1.4px;height:257.8px;background:#dfe5f1"></div>
<div class="a" style="left:485.7px;top:300.2px;width:1.4px;height:257.8px;background:#dfe5f1"></div>
<div class="a" style="left:586.1px;top:300.2px;width:1.4px;height:257.8px;background:#dfe5f1"></div>
<div class="a" style="left:663.8px;top:300.2px;width:1.4px;height:257.8px;background:#dfe5f1"></div>
<div class="a" style="left:750.8px;top:300.2px;width:1.4px;height:257.8px;background:#dfe5f1"></div>
<div class="a" style="left:821.3px;top:300.2px;width:1.4px;height:257.8px;background:#dfe5f1"></div>
<div class="a" style="left:896.3px;top:300.2px;width:1.4px;height:257.8px;background:#dfe5f1"></div>
<div class="a" style="left:981.1px;top:300.2px;width:1.4px;height:257.8px;background:#dfe5f1"></div>
<div class="a" style="left:282px;top:331.0px;width:699.8px;height:1.4px;background:#dfe5f1"></div>
<div class="a" style="left:282px;top:347.2px;width:699.8px;height:1.4px;background:#dfe5f1"></div>
<div class="a" style="left:282px;top:363.4px;width:699.8px;height:1.4px;background:#dfe5f1"></div>
<div class="a" style="left:282px;top:379.6px;width:699.8px;height:1.4px;background:#dfe5f1"></div>
<div class="a" style="left:282px;top:395.8px;width:699.8px;height:1.4px;background:#dfe5f1"></div>
<div class="a" style="left:282px;top:412.0px;width:699.8px;height:1.4px;background:#dfe5f1"></div>
<div class="a" style="left:282px;top:428.2px;width:699.8px;height:1.4px;background:#dfe5f1"></div>
<div class="a" style="left:282px;top:444.4px;width:699.8px;height:1.4px;background:#dfe5f1"></div>
<div class="a" style="left:282px;top:460.6px;width:699.8px;height:1.4px;background:#dfe5f1"></div>
<div class="a" style="left:282px;top:476.8px;width:699.8px;height:1.4px;background:#dfe5f1"></div>
<div class="a" style="left:282px;top:493.0px;width:699.8px;height:1.4px;background:#dfe5f1"></div>
<div class="a" style="left:282px;top:509.2px;width:699.8px;height:1.4px;background:#dfe5f1"></div>
<div class="a" style="left:282px;top:525.4px;width:699.8px;height:1.4px;background:#dfe5f1"></div>
<div class="a" style="left:282px;top:541.6px;width:699.8px;height:1.4px;background:#dfe5f1"></div>
<div class="a" style="left:282px;top:557.8px;width:699.8px;height:1.4px;background:#dfe5f1"></div>
<div class="tx" id="t_54" style="left:286.40px;top:303.63px;font-size:10px;line-height:10px;color:#1b2335;font-weight:bold;letter-spacing:-0.569px;">Record</div>
<div class="tx" id="t_55" style="left:330.50px;top:303.63px;font-size:10px;line-height:10px;color:#1b2335;font-weight:bold;letter-spacing:-0.109px;">EmpID</div>
<div class="tx" id="t_56" style="left:373.40px;top:303.63px;font-size:10px;line-height:10px;color:#1b2335;font-weight:bold;letter-spacing:-0.177px;">FirstName</div>
<div class="tx" id="t_57" style="left:431.40px;top:303.63px;font-size:10px;line-height:10px;color:#1b2335;font-weight:bold;letter-spacing:-0.180px;">LastName</div>
<div class="tx" id="t_58" style="left:490.30px;top:303.63px;font-size:10px;line-height:10px;color:#1b2335;font-weight:bold;letter-spacing:-0.297px;">Education</div>
<div class="tx" id="t_59" style="left:590.60px;top:303.63px;font-size:10px;line-height:10px;color:#1b2335;font-weight:bold;letter-spacing:-0.290px;">Occupation</div>
<div class="tx" id="t_60" style="left:667.00px;top:303.63px;font-size:10px;line-height:10px;color:#1b2335;font-weight:bold;letter-spacing:-0.300px;">CountryName</div>
<div class="tx" id="t_61" style="left:755.20px;top:303.63px;font-size:10px;line-height:10px;color:#1b2335;font-weight:bold;letter-spacing:-0.100px;">YearlyInco...</div>
<div class="tx" id="t_62" style="left:824.60px;top:303.63px;font-size:10px;line-height:10px;color:#1b2335;font-weight:bold;letter-spacing:-0.628px;">Sales</div>
<div class="tx" id="t_63" style="left:899.70px;top:303.63px;font-size:10px;line-height:10px;color:#1b2335;font-weight:bold;letter-spacing:-0.052px;">HireDate</div>
<div class="tx" id="t_64" style="left:22.35px;width:300px;text-align:right;top:320.67px;font-size:10.2px;line-height:10.2px;color:#454953;letter-spacing:-0.35px;">1</div>
<div class="tx" id="t_65" style="left:330.30px;top:320.67px;font-size:10.2px;line-height:10.2px;color:#454953;letter-spacing:-0.35px;">2</div>
<div class="tx" id="t_66" style="left:373.50px;top:320.67px;font-size:10.2px;line-height:10.2px;color:#454953;">Rob</div>
<div class="tx" id="t_67" style="left:431.00px;top:320.67px;font-size:10.2px;line-height:10.2px;color:#454953;">Johnson</div>
<div class="tx" id="t_68" style="left:490.50px;top:320.67px;font-size:10.2px;line-height:10.2px;color:#454953;">Bachelors</div>
<div class="tx" id="t_69" style="left:590.80px;top:320.67px;font-size:10.2px;line-height:10.2px;color:#454953;">Management</div>
<div class="tx" id="t_70" style="left:667.00px;top:320.67px;font-size:10.2px;line-height:10.2px;color:#454953;">Canada</div>
<div class="tx" id="t_71" style="left:754.80px;top:320.67px;font-size:10.2px;line-height:10.2px;color:#454953;letter-spacing:-0.37px;">80000</div>
<div class="tx" id="t_72" style="left:825.00px;top:320.67px;font-size:10.2px;line-height:10.2px;color:#454953;letter-spacing:-0.37px;">3399.99</div>
<div class="tx" id="t_73" style="left:899.80px;top:320.67px;font-size:10.2px;line-height:10.2px;color:#454953;letter-spacing:-0.13px;">29-12-2010</div>
<div class="tx" id="t_74" style="left:22.35px;width:300px;text-align:right;top:336.87px;font-size:10.2px;line-height:10.2px;color:#454953;letter-spacing:-0.35px;">2</div>
<div class="tx" id="t_75" style="left:330.30px;top:336.87px;font-size:10.2px;line-height:10.2px;color:#454953;letter-spacing:-0.35px;">1</div>
<div class="tx" id="t_76" style="left:373.50px;top:336.87px;font-size:10.2px;line-height:10.2px;color:#454953;">John</div>
<div class="tx" id="t_77" style="left:431.00px;top:336.87px;font-size:10.2px;line-height:10.2px;color:#454953;">Yang</div>
<div class="tx" id="t_78" style="left:490.50px;top:336.87px;font-size:10.2px;line-height:10.2px;color:#454953;">Bachelors</div>
<div class="tx" id="t_79" style="left:590.80px;top:336.87px;font-size:10.2px;line-height:10.2px;color:#454953;">Professional</div>
<div class="tx" id="t_80" style="left:667.00px;top:336.87px;font-size:10.2px;line-height:10.2px;color:#454953;">Australia</div>
<div class="tx" id="t_81" style="left:754.80px;top:336.87px;font-size:10.2px;line-height:10.2px;color:#454953;letter-spacing:-0.37px;">90000</div>
<div class="tx" id="t_82" style="left:825.00px;top:336.87px;font-size:10.2px;line-height:10.2px;color:#454953;letter-spacing:-0.37px;">3578</div>
<div class="tx" id="t_83" style="left:899.80px;top:336.87px;font-size:10.2px;line-height:10.2px;color:#454953;letter-spacing:-0.13px;">28-01-2006</div>
<div class="tx" id="t_84" style="left:22.35px;width:300px;text-align:right;top:353.07px;font-size:10.2px;line-height:10.2px;color:#454953;letter-spacing:-0.35px;">3</div>
<div class="tx" id="t_85" style="left:330.30px;top:353.07px;font-size:10.2px;line-height:10.2px;color:#454953;letter-spacing:-0.35px;">4</div>
<div class="tx" id="t_86" style="left:373.50px;top:353.07px;font-size:10.2px;line-height:10.2px;color:#454953;">Christy</div>
<div class="tx" id="t_87" style="left:431.00px;top:353.07px;font-size:10.2px;line-height:10.2px;color:#454953;">Zhu</div>
<div class="tx" id="t_88" style="left:490.50px;top:353.07px;font-size:10.2px;line-height:10.2px;color:#454953;">Bachelors</div>
<div class="tx" id="t_89" style="left:590.80px;top:353.07px;font-size:10.2px;line-height:10.2px;color:#454953;">Professional</div>
<div class="tx" id="t_90" style="left:667.00px;top:353.07px;font-size:10.2px;line-height:10.2px;color:#454953;">United States</div>
<div class="tx" id="t_91" style="left:754.80px;top:353.07px;font-size:10.2px;line-height:10.2px;color:#454953;letter-spacing:-0.37px;">80000.0</div>
<div class="tx" id="t_92" style="left:825.00px;top:353.07px;font-size:10.2px;line-height:10.2px;color:#454953;letter-spacing:-0.37px;">3078</div>
<div class="tx" id="t_93" style="left:899.80px;top:353.07px;font-size:10.2px;line-height:10.2px;color:#454953;letter-spacing:-0.13px;">28-12-2012</div>
<div class="tx" id="t_94" style="left:22.35px;width:300px;text-align:right;top:369.27px;font-size:10.2px;line-height:10.2px;color:#454953;letter-spacing:-0.35px;">4</div>
<div class="tx" id="t_95" style="left:330.30px;top:369.27px;font-size:10.2px;line-height:10.2px;color:#454953;letter-spacing:-0.35px;">6</div>
<div class="tx" id="t_96" style="left:373.50px;top:369.27px;font-size:10.2px;line-height:10.2px;color:#454953;">John</div>
<div class="tx" id="t_97" style="left:431.00px;top:369.27px;font-size:10.2px;line-height:10.2px;color:#454953;">Ruiz</div>
<div class="tx" id="t_98" style="left:490.50px;top:369.27px;font-size:10.2px;line-height:10.2px;color:#454953;">Bachelors</div>
<div class="tx" id="t_99" style="left:590.80px;top:369.27px;font-size:10.2px;line-height:10.2px;color:#454953;">Professional</div>
<div class="tx" id="t_100" style="left:667.00px;top:369.27px;font-size:10.2px;line-height:10.2px;color:#454953;">Australia</div>
<div class="tx" id="t_101" style="left:754.80px;top:369.27px;font-size:10.2px;line-height:10.2px;color:#454953;letter-spacing:-0.37px;">70000.0</div>
<div class="tx" id="t_102" style="left:825.00px;top:369.27px;font-size:10.2px;line-height:10.2px;color:#454953;letter-spacing:-0.37px;">539.99</div>
<div class="tx" id="t_103" style="left:899.80px;top:369.27px;font-size:10.2px;line-height:10.2px;color:#454953;letter-spacing:-0.13px;">06-07-2009</div>
<div class="tx" id="t_104" style="left:22.35px;width:300px;text-align:right;top:385.47px;font-size:10.2px;line-height:10.2px;color:#454953;letter-spacing:-0.35px;">5</div>
<div class="tx" id="t_105" style="left:330.30px;top:385.47px;font-size:10.2px;line-height:10.2px;color:#454953;letter-spacing:-0.35px;">12</div>
<div class="tx" id="t_106" style="left:373.50px;top:385.47px;font-size:10.2px;line-height:10.2px;color:#454953;">Barry</div>
<div class="tx" id="t_107" style="left:431.00px;top:385.47px;font-size:10.2px;line-height:10.2px;color:#454953;">Johnson</div>
<div class="tx" id="t_108" style="left:490.50px;top:385.47px;font-size:10.2px;line-height:10.2px;color:#454953;">Education</div>
<div class="tx" id="t_109" style="left:590.80px;top:385.47px;font-size:10.2px;line-height:10.2px;color:#454953;">Management</div>
<div class="tx" id="t_110" style="left:667.00px;top:385.47px;font-size:10.2px;line-height:10.2px;color:#454953;">Germany</div>
<div class="tx" id="t_111" style="left:754.80px;top:385.47px;font-size:10.2px;line-height:10.2px;color:#454953;letter-spacing:-0.37px;">80000.0</div>
<div class="tx" id="t_112" style="left:825.00px;top:385.47px;font-size:10.2px;line-height:10.2px;color:#454953;letter-spacing:-0.37px;">4968.59</div>
<div class="tx" id="t_113" style="left:899.80px;top:385.47px;font-size:10.2px;line-height:10.2px;color:#454953;letter-spacing:-0.13px;">15-05-2014</div>
<div class="tx" id="t_114" style="left:22.35px;width:300px;text-align:right;top:401.67px;font-size:10.2px;line-height:10.2px;color:#454953;letter-spacing:-0.35px;">6</div>
<div class="tx" id="t_115" style="left:330.30px;top:401.67px;font-size:10.2px;line-height:10.2px;color:#454953;letter-spacing:-0.35px;">11</div>
<div class="tx" id="t_116" style="left:373.50px;top:401.67px;font-size:10.2px;line-height:10.2px;color:#454953;">Gail</div>
<div class="tx" id="t_117" style="left:431.00px;top:401.67px;font-size:10.2px;line-height:10.2px;color:#454953;">Erickson</div>
<div class="tx" id="t_118" style="left:490.50px;top:401.67px;font-size:10.2px;line-height:10.2px;color:#454953;">Education</div>
<div class="tx" id="t_119" style="left:590.80px;top:401.67px;font-size:10.2px;line-height:10.2px;color:#454953;">Professional</div>
<div class="tx" id="t_120" style="left:667.00px;top:401.67px;font-size:10.2px;line-height:10.2px;color:#454953;">France</div>
<div class="tx" id="t_121" style="left:754.80px;top:401.67px;font-size:10.2px;line-height:10.2px;color:#454953;letter-spacing:-0.37px;">90000.0</div>
<div class="tx" id="t_122" style="left:825.00px;top:401.67px;font-size:10.2px;line-height:10.2px;color:#454953;letter-spacing:-0.37px;">4319.99</div>
<div class="tx" id="t_123" style="left:899.80px;top:401.67px;font-size:10.2px;line-height:10.2px;color:#454953;letter-spacing:-0.13px;">02-10-2006</div>
<div class="tx" id="t_124" style="left:22.35px;width:300px;text-align:right;top:417.87px;font-size:10.2px;line-height:10.2px;color:#454953;letter-spacing:-0.35px;">7</div>
<div class="tx" id="t_125" style="left:330.30px;top:417.87px;font-size:10.2px;line-height:10.2px;color:#454953;letter-spacing:-0.35px;">13</div>
<div class="tx" id="t_126" style="left:373.50px;top:417.87px;font-size:10.2px;line-height:10.2px;color:#454953;">Peter</div>
<div class="tx" id="t_127" style="left:431.00px;top:417.87px;font-size:10.2px;line-height:10.2px;color:#454953;">Krebs</div>
<div class="tx" id="t_128" style="left:490.50px;top:417.87px;font-size:10.2px;line-height:10.2px;color:#454953;">Graduate Degree</div>
<div class="tx" id="t_129" style="left:590.80px;top:417.87px;font-size:10.2px;line-height:10.2px;color:#454953;">Clerical</div>
<div class="tx" id="t_130" style="left:667.00px;top:417.87px;font-size:10.2px;line-height:10.2px;color:#454953;">Canada</div>
<div class="tx" id="t_131" style="left:754.80px;top:417.87px;font-size:10.2px;line-height:10.2px;color:#454953;letter-spacing:-0.37px;">50000.0</div>
<div class="tx" id="t_132" style="left:825.00px;top:417.87px;font-size:10.2px;line-height:10.2px;color:#454953;letter-spacing:-0.37px;">59.53</div>
<div class="tx" id="t_133" style="left:899.80px;top:417.87px;font-size:10.2px;line-height:10.2px;color:#454953;letter-spacing:-0.13px;">14-01-2013</div>
<div class="tx" id="t_134" style="left:22.35px;width:300px;text-align:right;top:434.07px;font-size:10.2px;line-height:10.2px;color:#454953;letter-spacing:-0.35px;">8</div>
<div class="tx" id="t_135" style="left:330.30px;top:434.07px;font-size:10.2px;line-height:10.2px;color:#454953;letter-spacing:-0.35px;">10</div>
<div class="tx" id="t_136" style="left:373.50px;top:434.07px;font-size:10.2px;line-height:10.2px;color:#454953;">Christy</div>
<div class="tx" id="t_137" style="left:431.00px;top:434.07px;font-size:10.2px;line-height:10.2px;color:#454953;">Carlson</div>
<div class="tx" id="t_138" style="left:490.50px;top:434.07px;font-size:10.2px;line-height:10.2px;color:#454953;">Graduate Degree</div>
<div class="tx" id="t_139" style="left:590.80px;top:434.07px;font-size:10.2px;line-height:10.2px;color:#454953;">Management</div>
<div class="tx" id="t_140" style="left:667.00px;top:434.07px;font-size:10.2px;line-height:10.2px;color:#454953;">Germany</div>
<div class="tx" id="t_141" style="left:754.80px;top:434.07px;font-size:10.2px;line-height:10.2px;color:#454953;letter-spacing:-0.37px;">70000.0</div>
<div class="tx" id="t_142" style="left:825.00px;top:434.07px;font-size:10.2px;line-height:10.2px;color:#454953;letter-spacing:-0.37px;">2234.99</div>
<div class="tx" id="t_143" style="left:899.80px;top:434.07px;font-size:10.2px;line-height:10.2px;color:#454953;letter-spacing:-0.13px;">25-01-2014</div>
<div class="tx" id="t_144" style="left:22.35px;width:300px;text-align:right;top:450.27px;font-size:10.2px;line-height:10.2px;color:#454953;letter-spacing:-0.35px;">9</div>
<div class="tx" id="t_145" style="left:330.30px;top:450.27px;font-size:10.2px;line-height:10.2px;color:#454953;letter-spacing:-0.35px;">5</div>
<div class="tx" id="t_146" style="left:373.50px;top:450.27px;font-size:10.2px;line-height:10.2px;color:#454953;">Rob</div>
<div class="tx" id="t_147" style="left:431.00px;top:450.27px;font-size:10.2px;line-height:10.2px;color:#454953;">Huang</div>
<div class="tx" id="t_148" style="left:490.50px;top:450.27px;font-size:10.2px;line-height:10.2px;color:#454953;">High School</div>
<div class="tx" id="t_149" style="left:590.80px;top:450.27px;font-size:10.2px;line-height:10.2px;color:#454953;">Skilled Manual</div>
<div class="tx" id="t_150" style="left:667.00px;top:450.27px;font-size:10.2px;line-height:10.2px;color:#454953;">Canada</div>
<div class="tx" id="t_151" style="left:754.80px;top:450.27px;font-size:10.2px;line-height:10.2px;color:#454953;letter-spacing:-0.37px;">60000.0</div>
<div class="tx" id="t_152" style="left:825.00px;top:450.27px;font-size:10.2px;line-height:10.2px;color:#454953;letter-spacing:-0.37px;">2319.99</div>
<div class="tx" id="t_153" style="left:899.80px;top:450.27px;font-size:10.2px;line-height:10.2px;color:#454953;letter-spacing:-0.13px;">22-09-2008</div>
<div class="tx" id="t_154" style="left:22.35px;width:300px;text-align:right;top:466.47px;font-size:10.2px;line-height:10.2px;color:#454953;letter-spacing:-0.35px;">10</div>
<div class="tx" id="t_155" style="left:330.30px;top:466.47px;font-size:10.2px;line-height:10.2px;color:#454953;letter-spacing:-0.35px;">7</div>
<div class="tx" id="t_156" style="left:373.50px;top:466.47px;font-size:10.2px;line-height:10.2px;color:#454953;">John</div>
<div class="tx" id="t_157" style="left:431.00px;top:466.47px;font-size:10.2px;line-height:10.2px;color:#454953;">Miller</div>
<div class="tx" id="t_158" style="left:490.50px;top:466.47px;font-size:10.2px;line-height:10.2px;color:#454953;">Masters Degree</div>
<div class="tx" id="t_159" style="left:590.80px;top:466.47px;font-size:10.2px;line-height:10.2px;color:#454953;">Management</div>
<div class="tx" id="t_160" style="left:667.00px;top:466.47px;font-size:10.2px;line-height:10.2px;color:#454953;">United States</div>
<div class="tx" id="t_161" style="left:754.80px;top:466.47px;font-size:10.2px;line-height:10.2px;color:#454953;letter-spacing:-0.37px;">80000.0</div>
<div class="tx" id="t_162" style="left:825.00px;top:466.47px;font-size:10.2px;line-height:10.2px;color:#454953;letter-spacing:-0.37px;">2320.49</div>
<div class="tx" id="t_163" style="left:899.80px;top:466.47px;font-size:10.2px;line-height:10.2px;color:#454953;letter-spacing:-0.13px;">12-08-2009</div>
<div class="tx" id="t_164" style="left:22.35px;width:300px;text-align:right;top:482.67px;font-size:10.2px;line-height:10.2px;color:#454953;letter-spacing:-0.35px;">11</div>
<div class="tx" id="t_165" style="left:330.30px;top:482.67px;font-size:10.2px;line-height:10.2px;color:#454953;letter-spacing:-0.35px;">15</div>
<div class="tx" id="t_166" style="left:373.50px;top:482.67px;font-size:10.2px;line-height:10.2px;color:#454953;">Tutorial</div>
<div class="tx" id="t_167" style="left:431.00px;top:482.67px;font-size:10.2px;line-height:10.2px;color:#454953;">Gateway</div>
<div class="tx" id="t_168" style="left:490.50px;top:482.67px;font-size:10.2px;line-height:10.2px;color:#454953;">Masters Degree</div>
<div class="tx" id="t_169" style="left:590.80px;top:482.67px;font-size:10.2px;line-height:10.2px;color:#454953;">Management</div>
<div class="tx" id="t_170" style="left:667.00px;top:482.67px;font-size:10.2px;line-height:10.2px;color:#454953;">United Kingdom</div>
<div class="tx" id="t_171" style="left:754.80px;top:482.67px;font-size:10.2px;line-height:10.2px;color:#454953;letter-spacing:-0.37px;">125000.0</div>
<div class="tx" id="t_172" style="left:825.00px;top:482.67px;font-size:10.2px;line-height:10.2px;color:#454953;letter-spacing:-0.37px;">1290.0</div>
<div class="tx" id="t_173" style="left:899.80px;top:482.67px;font-size:10.2px;line-height:10.2px;color:#454953;letter-spacing:-0.13px;">05-07-2006</div>
<div class="tx" id="t_174" style="left:22.35px;width:300px;text-align:right;top:498.87px;font-size:10.2px;line-height:10.2px;color:#454953;letter-spacing:-0.35px;">12</div>
<div class="tx" id="t_175" style="left:330.30px;top:498.87px;font-size:10.2px;line-height:10.2px;color:#454953;letter-spacing:-0.35px;">3</div>
<div class="tx" id="t_176" style="left:373.50px;top:498.87px;font-size:10.2px;line-height:10.2px;color:#454953;">Ruben</div>
<div class="tx" id="t_177" style="left:431.00px;top:498.87px;font-size:10.2px;line-height:10.2px;color:#454953;">Torres</div>
<div class="tx" id="t_178" style="left:490.50px;top:498.87px;font-size:10.2px;line-height:10.2px;color:#454953;">Partial College</div>
<div class="tx" id="t_179" style="left:590.80px;top:498.87px;font-size:10.2px;line-height:10.2px;color:#454953;">Skilled Manual</div>
<div class="tx" id="t_180" style="left:667.00px;top:498.87px;font-size:10.2px;line-height:10.2px;color:#454953;">Germany</div>
<div class="tx" id="t_181" style="left:754.80px;top:498.87px;font-size:10.2px;line-height:10.2px;color:#454953;letter-spacing:-0.37px;">50000</div>
<div class="tx" id="t_182" style="left:825.00px;top:498.87px;font-size:10.2px;line-height:10.2px;color:#454953;letter-spacing:-0.37px;">699.0982</div>
<div class="tx" id="t_183" style="left:899.80px;top:498.87px;font-size:10.2px;line-height:10.2px;color:#454953;letter-spacing:-0.13px;">29-12-2011</div>
<div class="tx" id="t_184" style="left:22.35px;width:300px;text-align:right;top:515.07px;font-size:10.2px;line-height:10.2px;color:#454953;letter-spacing:-0.35px;">13</div>
<div class="tx" id="t_185" style="left:330.30px;top:515.07px;font-size:10.2px;line-height:10.2px;color:#454953;letter-spacing:-0.35px;">8</div>
<div class="tx" id="t_186" style="left:373.50px;top:515.07px;font-size:10.2px;line-height:10.2px;color:#454953;">Christy</div>
<div class="tx" id="t_187" style="left:431.00px;top:515.07px;font-size:10.2px;line-height:10.2px;color:#454953;">Mehta</div>
<div class="tx" id="t_188" style="left:490.50px;top:515.07px;font-size:10.2px;line-height:10.2px;color:#454953;">Partial High School</div>
<div class="tx" id="t_189" style="left:590.80px;top:515.07px;font-size:10.2px;line-height:10.2px;color:#454953;">Clerical</div>
<div class="tx" id="t_190" style="left:667.00px;top:515.07px;font-size:10.2px;line-height:10.2px;color:#454953;">United Kingdom</div>
<div class="tx" id="t_191" style="left:754.80px;top:515.07px;font-size:10.2px;line-height:10.2px;color:#454953;letter-spacing:-0.37px;">50000.0</div>
<div class="tx" id="t_192" style="left:825.00px;top:515.07px;font-size:10.2px;line-height:10.2px;color:#454953;letter-spacing:-0.37px;">24.99</div>
<div class="tx" id="t_193" style="left:899.80px;top:515.07px;font-size:10.2px;line-height:10.2px;color:#454953;letter-spacing:-0.13px;">05-07-2007</div>
<div class="tx" id="t_194" style="left:22.35px;width:300px;text-align:right;top:531.27px;font-size:10.2px;line-height:10.2px;color:#454953;letter-spacing:-0.35px;">14</div>
<div class="tx" id="t_195" style="left:330.30px;top:531.27px;font-size:10.2px;line-height:10.2px;color:#454953;letter-spacing:-0.35px;">9</div>
<div class="tx" id="t_196" style="left:373.50px;top:531.27px;font-size:10.2px;line-height:10.2px;color:#454953;">Rob</div>
<div class="tx" id="t_197" style="left:431.00px;top:531.27px;font-size:10.2px;line-height:10.2px;color:#454953;">Verhoff</div>
<div class="tx" id="t_198" style="left:490.50px;top:531.27px;font-size:10.2px;line-height:10.2px;color:#454953;">Partial High School</div>
<div class="tx" id="t_199" style="left:590.80px;top:531.27px;font-size:10.2px;line-height:10.2px;color:#454953;">Clerical</div>
<div class="tx" id="t_200" style="left:667.00px;top:531.27px;font-size:10.2px;line-height:10.2px;color:#454953;">France</div>
<div class="tx" id="t_201" style="left:754.80px;top:531.27px;font-size:10.2px;line-height:10.2px;color:#454953;letter-spacing:-0.37px;">45000.0</div>
<div class="tx" id="t_202" style="left:825.00px;top:531.27px;font-size:10.2px;line-height:10.2px;color:#454953;letter-spacing:-0.37px;">24.99</div>
<div class="tx" id="t_203" style="left:899.80px;top:531.27px;font-size:10.2px;line-height:10.2px;color:#454953;letter-spacing:-0.13px;">15-09-2013</div>
<div class="tx" id="t_204" style="left:22.35px;width:300px;text-align:right;top:547.47px;font-size:10.2px;line-height:10.2px;color:#454953;letter-spacing:-0.35px;">15</div>
<div class="tx" id="t_205" style="left:330.30px;top:547.47px;font-size:10.2px;line-height:10.2px;color:#454953;letter-spacing:-0.35px;">14</div>
<div class="tx" id="t_206" style="left:373.50px;top:547.47px;font-size:10.2px;line-height:10.2px;color:#454953;">Greg</div>
<div class="tx" id="t_207" style="left:431.00px;top:547.47px;font-size:10.2px;line-height:10.2px;color:#454953;">Alderson</div>
<div class="tx" id="t_208" style="left:490.50px;top:547.47px;font-size:10.2px;line-height:10.2px;color:#454953;">Partial High School</div>
<div class="tx" id="t_209" style="left:590.80px;top:547.47px;font-size:10.2px;line-height:10.2px;color:#454953;">Clerical</div>
<div class="tx" id="t_210" style="left:667.00px;top:547.47px;font-size:10.2px;line-height:10.2px;color:#454953;">United States</div>
<div class="tx" id="t_211" style="left:754.80px;top:547.47px;font-size:10.2px;line-height:10.2px;color:#454953;letter-spacing:-0.37px;">45000.0</div>
<div class="tx" id="t_212" style="left:825.00px;top:547.47px;font-size:10.2px;line-height:10.2px;color:#454953;letter-spacing:-0.37px;">23.5</div>
<div class="tx" id="t_213" style="left:899.80px;top:547.47px;font-size:10.2px;line-height:10.2px;color:#454953;letter-spacing:-0.13px;">05-07-2013</div>
<div class="a" style="left:480.2px;top:296px;width:185.6px;height:269.2px;border:2.3px solid #7c0e0e"></div>
</body></html>
